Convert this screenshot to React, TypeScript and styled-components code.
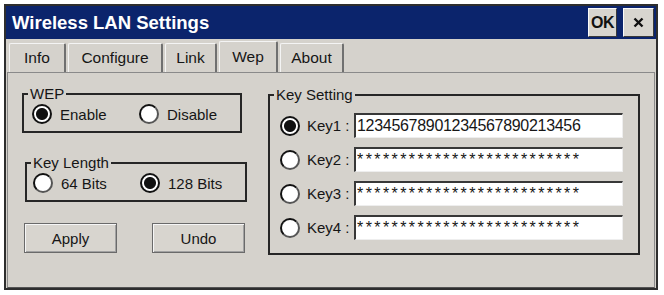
import React from "react";
import styled, { createGlobalStyle } from "styled-components";

const GlobalStyle = createGlobalStyle`
  body {
    margin: 0;
    background: #fff;
    font-family: "Liberation Sans", Arial, sans-serif;
    color: #161616;
  }
`;

const Window = styled.div`
  box-sizing: border-box;
  width: 654px;
  height: 286px;
  margin: 4px 0 0 4px;
  border: 2px solid #2e2e2e;
  background: #d5d2cc;
  display: flex;
  flex-direction: column;
`;

const TitleBar = styled.div`
  height: 33px;
  flex-shrink: 0;
  background: #0b246c;
  display: flex;
  align-items: center;
  gap: 6px;
  padding: 0 2px 0 6px;
`;

const Title = styled.div`
  flex: 1;
  color: #fff;
  font-weight: bold;
  font-size: 18.5px;
`;

const TitleButton = styled.button<{ $w: number }>`
  box-sizing: border-box;
  width: ${(p) => p.$w}px;
  height: 29px;
  padding: 0;
  background: #d8d5cf;
  border: 1px solid;
  border-color: #fafafa #3a3a3a #3a3a3a #fafafa;
  font-family: "Liberation Sans", Arial, sans-serif;
  font-weight: bold;
  font-size: 16px;
  letter-spacing: -0.5px;
  color: #111;
  display: flex;
  align-items: center;
  justify-content: center;
`;

const TabStrip = styled.div`
  height: 33px;
  flex-shrink: 0;
  display: flex;
  align-items: flex-end;
  gap: 2px;
  padding-left: 3px;
`;

const Tab = styled.div<{ $w: number; $active?: boolean }>`
  box-sizing: border-box;
  width: ${(p) => p.$w}px;
  height: ${(p) => (p.$active ? 31 : 29)}px;
  display: flex;
  align-items: center;
  justify-content: center;
  font-size: 15.5px;
  border-top: 1px solid #f4f4f4;
  border-left: 1px solid #f4f4f4;
  border-right: 2px solid #707070;
  border-radius: 2px 2px 0 0;
`;

const Panel = styled.div`
  flex: 1;
  margin: 0 1px 0 1px;
  border: 1px solid #8a8a8a;
  border-bottom-color: #555;
  display: flex;
  align-items: flex-start;
  padding-top: 13px;
`;

const LeftColumn = styled.div`
  width: 260px;
  flex-shrink: 0;
  display: flex;
  flex-direction: column;
  align-items: flex-start;
`;

const GroupBox = styled.fieldset<{ $ml: number; $mt?: number; $w: number }>`
  box-sizing: border-box;
  width: ${(p) => p.$w}px;
  min-width: 0;
  margin: ${(p) => p.$mt ?? 0}px 0 0 ${(p) => p.$ml}px;
  border: 2px solid #262626;
  padding: 2px 0 7px 0;
`;

const Legend = styled.legend`
  font-size: 15px;
  line-height: 16px;
  padding: 0 2px;
  margin-left: 4px;
`;

const RadioPair = styled.div<{ $pl: number }>`
  display: grid;
  grid-template-columns: 107px auto;
  padding-left: ${(p) => p.$pl}px;
`;

const RadioItem = styled.label`
  display: flex;
  align-items: center;
  gap: 8px;
  height: 20px;
  font-size: 15px;
`;

const Radio = styled.span<{ $on?: boolean }>`
  box-sizing: border-box;
  width: 20px;
  height: 20px;
  flex-shrink: 0;
  border-radius: 50%;
  border: 2px solid;
  border-color: ${(p) => (p.$on ? "#111" : "#111 #555 #555 #111")};
  background: ${(p) =>
    p.$on ? "radial-gradient(circle, #111 0 5.5px, #fff 6.5px)" : "#fff"};
`;

const ButtonRow = styled.div`
  display: flex;
  gap: 35px;
  margin: 21px 0 0 16px;
`;

const PushButton = styled.button`
  box-sizing: border-box;
  width: 93px;
  height: 30px;
  background: #d8d5cf;
  border: 1px solid #6a6a6a;
  box-shadow: inset 1px 1px 0 #f6f6f6, inset -1px -1px 0 #a2a2a2;
  font-family: "Liberation Sans", Arial, sans-serif;
  font-size: 15px;
  color: #161616;
`;

const KeyBox = styled(GroupBox)`
  padding: 10px 0 13px 0;
`;

const KeyRows = styled.div`
  display: flex;
  flex-direction: column;
  gap: 9px;
  padding-left: 10px;
`;

const KeyRow = styled.div`
  display: flex;
  align-items: center;
  height: 25px;
`;

const KeyLabel = styled.span`
  width: 47px;
  margin-left: 7px;
  font-size: 15px;
  white-space: nowrap;
`;

const KeyInput = styled.input<{ $masked?: boolean }>`
  box-sizing: border-box;
  width: 269px;
  height: 25px;
  margin: 0;
  padding: 0 1px;
  background: #fff;
  border-top: 2px solid #383838;
  border-left: 2px solid #383838;
  border-right: 1px solid #eeeeee;
  border-bottom: 1px solid #eeeeee;
  outline: none;
  font-family: "Liberation Sans", Arial, sans-serif;
  font-size: 16px;
  letter-spacing: ${(p) => (p.$masked ? "2.4px" : "-0.3px")};
  color: #161616;
`;

const tabs = [
  { text: "Info", w: 57 },
  { text: "Configure", w: 95 },
  { text: "Link", w: 52 },
  { text: "Wep", w: 59, active: true },
  { text: "About", w: 64 },
];

const mask = "*".repeat(26);

const keys = [
  { name: "Key1", value: "12345678901234567890213456", on: true },
  { name: "Key2", value: mask },
  { name: "Key3", value: mask },
  { name: "Key4", value: mask },
];

const CloseIcon = () => (
  <svg width="11" height="11" viewBox="0 0 11 11">
    <path d="M1.5 1.5 L9.5 9.5 M9.5 1.5 L1.5 9.5" stroke="#111" strokeWidth="2.4" />
  </svg>
);

const App = () => (
  <>
    <GlobalStyle />
    <Window>
      <TitleBar>
        <Title>Wireless LAN Settings</Title>
        <TitleButton $w={29}>OK</TitleButton>
        <TitleButton $w={31}>
          <CloseIcon />
        </TitleButton>
      </TitleBar>
      <TabStrip>
        {tabs.map(({ text, w, active }) => (
          <Tab key={text} $w={w} $active={active}>
            {text}
          </Tab>
        ))}
      </TabStrip>
      <Panel>
        <LeftColumn>
          <GroupBox $ml={14} $w={220}>
            <Legend>WEP</Legend>
            <RadioPair $pl={8}>
              <RadioItem>
                <Radio $on />
                Enable
              </RadioItem>
              <RadioItem>
                <Radio />
                Disable
              </RadioItem>
            </RadioPair>
          </GroupBox>
          <GroupBox $ml={17} $mt={22} $w={222}>
            <Legend>Key Length</Legend>
            <RadioPair $pl={6}>
              <RadioItem>
                <Radio />
                64 Bits
              </RadioItem>
              <RadioItem>
                <Radio $on />
                128 Bits
              </RadioItem>
            </RadioPair>
          </GroupBox>
          <ButtonRow>
            <PushButton>Apply</PushButton>
            <PushButton>Undo</PushButton>
          </ButtonRow>
        </LeftColumn>
        <KeyBox $ml={0} $mt={1} $w={372}>
          <Legend>Key Setting</Legend>
          <KeyRows>
            {keys.map(({ name, value, on }) => (
              <KeyRow key={name}>
                <Radio $on={on} />
                <KeyLabel>{name} :</KeyLabel>
                <KeyInput readOnly value={value} $masked={!on} />
              </KeyRow>
            ))}
          </KeyRows>
        </KeyBox>
      </Panel>
    </Window>
  </>
);

export default App;
